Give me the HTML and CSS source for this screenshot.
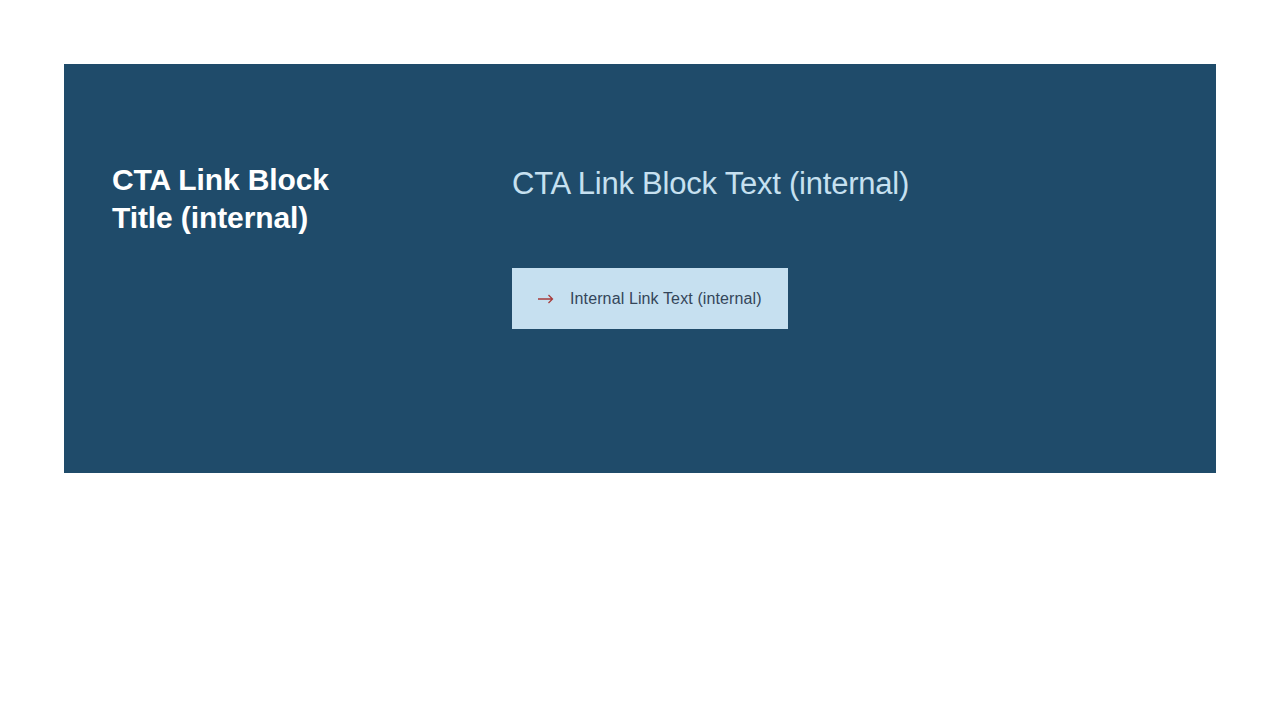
FILE: index.html
```html
<!DOCTYPE html>
<html lang="en">
<head>
<meta charset="utf-8">
<title>CTA Link Block</title>
<link rel="stylesheet" href="styles.css">
</head>
<body>
<section class="cta">
  <div class="cta-left">
    <h2 class="cta-title">CTA Link Block Title (internal)</h2>
  </div>
  <div class="cta-right">
    <p class="cta-text">CTA Link Block Text (internal)</p>
    <a class="cta-button" href="#">
      <svg class="cta-arrow" width="16" height="10" viewBox="0 0 16 10" aria-hidden="true">
        <path d="M0 5 H14.5 M10.5 1 L14.5 5 L10.5 9" fill="none" stroke="#a83b3b" stroke-width="1.3"/>
      </svg>
      <span>Internal Link Text (internal)</span>
    </a>
  </div>
</section>
</body>
</html>
```

FILE: styles.css
```css
html, body {
  margin: 0;
  padding: 0;
  background: #ffffff;
}
body {
  padding: 64px;
  font-family: "Liberation Sans", Arial, sans-serif;
}
.cta {
  background: #1f4b6a;
  display: flex;
  padding: 97px 48px 144px;
}
.cta-left {
  width: 400px;
  flex: none;
}
.cta-title {
  margin: 0;
  color: #ffffff;
  font-size: 30px;
  line-height: 38px;
  font-weight: 700;
  letter-spacing: -0.1px;
  width: 240px;
}
.cta-right {
  flex: 1;
  display: flex;
  flex-direction: column;
  align-items: flex-start;
}
.cta-text {
  margin: 4px 0 0;
  color: #c6e0f0;
  font-size: 31px;
  line-height: 38px;
  letter-spacing: -0.22px;
}
.cta-button {
  margin-top: 65px;
  display: flex;
  align-items: center;
  gap: 16px;
  height: 61px;
  padding: 0 26px;
  background: #c6e0f0;
  color: #34465a;
  text-decoration: none;
  font-size: 16px;
  letter-spacing: 0.12px;
}
.cta-arrow {
  flex: none;
}
```
